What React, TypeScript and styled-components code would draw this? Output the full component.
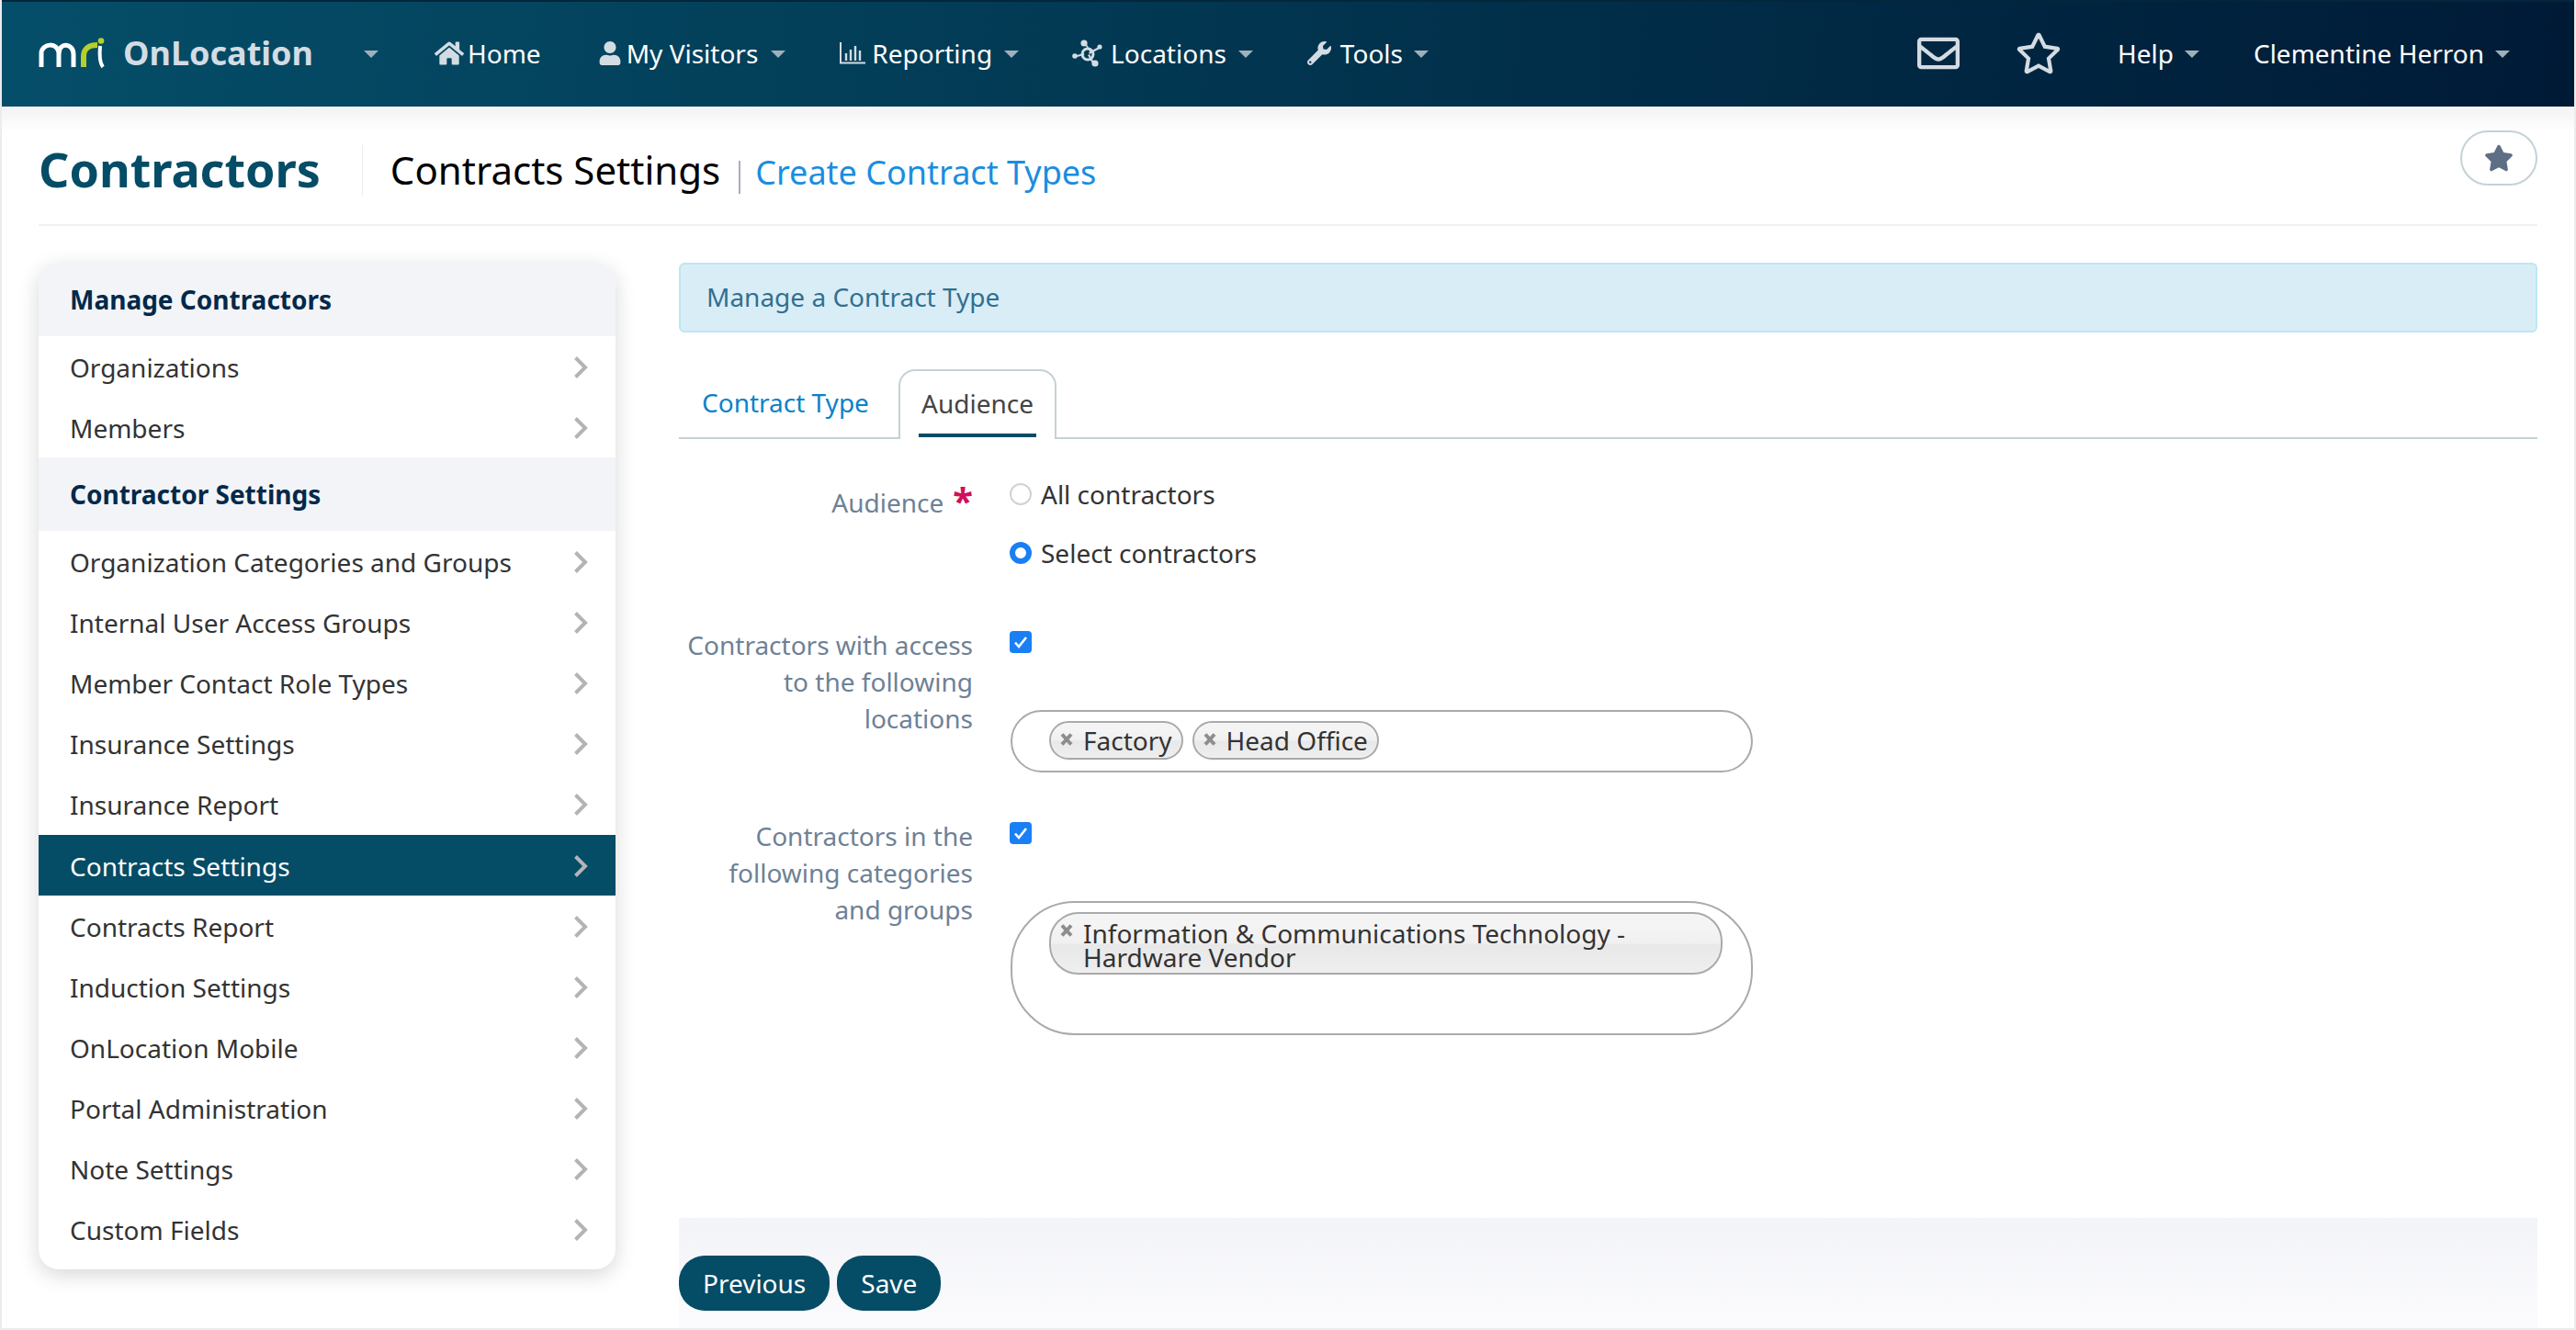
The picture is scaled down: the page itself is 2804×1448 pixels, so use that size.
import React from "react";
import styled, { createGlobalStyle } from "styled-components";
import { FaHome, FaUser, FaWrench, FaStar, FaRegStar, FaRegEnvelope } from "react-icons/fa";

const GlobalStyle = createGlobalStyle`
  html, body { margin: 0; padding: 0; background: #fff; }
  body { font-family: "Noto Sans", "Open Sans", sans-serif; font-size: 28px; color: #333; }
  * { box-sizing: border-box; }
`;

const Shell = styled.div`
  height: 1448px;
  width: 2804px;
  display: flex;
  flex-direction: column;
  border: 2px solid #ececec;
  border-top: 0;
  overflow: hidden;
`;

const TopBar = styled.header`
  height: 116px;
  flex: none;
  margin: 0 -2px;
  padding: 0 0 3px 42px;
  display: flex;
  align-items: center;
  color: #fff;
  border-top: 2px solid #04263a;
  background: linear-gradient(95deg, #054e69 0%, #03405a 30%, #012c47 65%, #001a36 100%);
`;

const Brand = styled.div`
  display: flex;
  align-items: center;
  width: 430px;
  flex: none;
`;

const BrandName = styled.span`
  margin-left: 20px;
  font-size: 36px;
  font-weight: 700;
  color: #d3dce3;
`;

const Caret = styled.i<{ $gap?: number; $after?: number }>`
  display: inline-block;
  width: 0;
  height: 0;
  margin-left: ${(p) => p.$gap ?? 12}px;
  margin-right: ${(p) => p.$after ?? 0}px;
  margin-top: 2px;
  border-left: 8px solid transparent;
  border-right: 8px solid transparent;
  border-top: 8px solid #9fb0bb;
`;

const BrandCaret = styled(Caret)`
  margin-left: 55px;
`;

const NavItem = styled.a`
  display: flex;
  align-items: center;
  color: #fff;
  font-size: 28px;
  white-space: nowrap;
  svg { color: #d3dce3; flex: none; }
`;

const UserMenu = styled(NavItem)`
  margin-left: 59px;
`;

const NavLabel = styled.span<{ $gap: number; $after?: number }>`
  margin-left: ${(p) => p.$gap}px;
  margin-right: ${(p) => p.$after ?? 0}px;
`;

const LeftNav = styled.nav`
  display: flex;
  align-items: center;
  gap: 58px;
  margin-left: 1px;
`;

const RightNav = styled.nav`
  margin-left: auto;
  margin-right: 72px;
  display: flex;
  align-items: center;
`;

const HeaderIcon = styled.span<{ $right: number }>`
  display: flex;
  color: #d3dce3;
  margin-right: ${(p) => p.$right}px;
`;

const HeaderShadow = styled.div`
  position: absolute;
  left: 0;
  right: 0;
  top: 0;
  height: 28px;
  background: linear-gradient(#f3f3f3, #fff);
`;

const TitleArea = styled.div`
  position: relative;
  flex: none;
  padding: 0 40px;
  height: 130px;
`;

const TitleBar = styled.div`
  position: relative;
  height: 130px;
  display: flex;
  align-items: flex-start;
  border-bottom: 2px solid #eef2f3;
`;

const PageTitle = styled.h1`
  margin: 42px 0 0;
  padding: 0 45px 0 0;
  height: 55px;
  font-size: 52px;
  line-height: 52px;
  font-weight: 700;
  color: #054c66;
  border-right: 1px solid #e9edef;
`;

const SubTitle = styled.div`
  margin-left: 30px;
  margin-top: 39px;
  display: flex;
  align-items: baseline;
  font-size: 42px;
  line-height: 60px;
  color: #000;
`;

const SubLink = styled.a`
  font-size: 36px;
  color: #1a8de0;
  margin-left: 20px;
  padding-left: 18px;
  position: relative;
  &::before {
    content: "";
    position: absolute;
    left: 0;
    top: 17px;
    height: 36px;
    width: 2px;
    background: #a9aebd;
  }
`;

const FavButton = styled.button`
  margin-left: auto;
  margin-top: 26px;
  width: 84px;
  height: 60px;
  border: 2px solid #c3d2d6;
  border-radius: 30px;
  background: #fff;
  color: #5e6e84;
  display: flex;
  align-items: center;
  justify-content: center;
  padding: 0;
`;

const Content = styled.div`
  flex: 1;
  min-height: 0;
  display: flex;
  padding: 40px 40px 0;
  gap: 69px;
`;

const Sidebar = styled.aside`
  width: 628px;
  align-self: flex-start;
  flex: none;
  border-radius: 22px;
  background: #fff;
  overflow: hidden;
  box-shadow: 0 6px 22px rgba(0, 0, 0, 0.16);
  padding-bottom: 10px;
`;

const SideHeading = styled.div`
  height: 80px;
  padding-left: 34px;
  display: flex;
  align-items: center;
  background: #f3f4f8;
  font-weight: 700;
  font-size: 28px;
  color: #02294a;
`;

const SideItem = styled.a<{ $active?: boolean }>`
  height: 66.15px;
  padding: 1px 30px 0 34px;
  display: flex;
  align-items: center;
  justify-content: space-between;
  font-size: 28px;
  color: ${(p) => (p.$active ? "#fff" : "#333")};
  background: ${(p) => (p.$active ? "#054c66" : "transparent")};
`;

const Chevron = () => (
  <svg width="16" height="26" viewBox="0 0 16 26" fill="none">
    <path d="M2.5 2.5 13 13 2.5 23.5" stroke="#b4b4b4" strokeWidth="4" />
  </svg>
);

const Main = styled.main`
  flex: 1;
  min-width: 0;
  display: flex;
  flex-direction: column;
`;

const InfoBar = styled.div`
  height: 76px;
  flex: none;
  padding: 0 0 2px 28px;
  display: flex;
  align-items: center;
  background: #d9edf7;
  border: 2px solid #bce8f1;
  border-radius: 6px;
  color: #31708f;
  font-size: 28px;
`;

const Tabs = styled.div`
  margin-top: 40px;
  height: 76px;
  flex: none;
  display: flex;
  align-items: stretch;
  border-bottom: 2px solid #c5d2d6;
`;

const PlainTab = styled.a`
  width: 239px;
  padding: 17px 0 0 25px;
  color: #0b82c8;
  font-size: 28px;
`;

const ActiveTab = styled.a`
  position: relative;
  width: 172px;
  height: 76px;
  padding-top: 16px;
  text-align: center;
  color: #444;
  font-size: 28px;
  background: #fff;
  border: 2px solid #c5d2d6;
  border-bottom: 0;
  border-radius: 18px 18px 0 0;
  &::after {
    content: "";
    position: absolute;
    left: 20px;
    right: 20px;
    bottom: 2px;
    height: 4px;
    background: #054c66;
  }
`;

const Form = styled.div`
  flex: 1;
  padding-top: 40px;
`;

const FormRow = styled.div<{ $bottom: number }>`
  display: flex;
  gap: 40px;
  margin-bottom: ${(p) => p.$bottom}px;
`;

const FieldLabel = styled.label<{ $top?: number }>`
  width: 320px;
  flex: none;
  padding-top: ${(p) => p.$top ?? 0}px;
  text-align: right;
  font-size: 28px;
  line-height: 40px;
  color: #6e8196;
`;

const Required = styled.span`
  color: #d0105a;
  font-size: 40px;
  font-weight: 700;
  line-height: 20px;
  margin-left: 10px;
  vertical-align: -2px;
`;

const Control = styled.div`
  flex: 1;
  min-width: 0;
`;

const RadioOption = styled.div`
  height: 40px;
  margin-bottom: 24px;
  display: flex;
  align-items: center;
  font-size: 28px;
  color: #333;
  &:last-child { margin-bottom: 0; }
`;

const RadioDot = styled.span<{ $on?: boolean }>`
  width: 24px;
  height: 24px;
  flex: none;
  margin-right: 10px;
  border-radius: 50%;
  background: #fff;
  border: ${(p) => (p.$on ? "6.5px solid #1a7ff5" : "2px solid #cfd2d4")};
`;

const CheckWrap = styled.div`
  height: 34px;
  display: flex;
  align-items: center;
`;

const CheckBox = styled.span`
  width: 24px;
  height: 24px;
  border-radius: 4px;
  background: #1a7ff5;
  display: flex;
  align-items: center;
  justify-content: center;
`;

const Check = () => (
  <svg width="16" height="14" viewBox="0 0 16 14" fill="none">
    <path d="M2 7.5 6 12 14 2" stroke="#fff" strokeWidth="2.6" />
  </svg>
);

const TagBox = styled.div<{ $height: number; $radius: number }>`
  width: 808px;
  height: ${(p) => p.$height}px;
  margin: 57px 0 0 1px;
  padding: 10px 30px 0 40px;
  display: flex;
  align-items: flex-start;
  gap: 10px;
  background: #fff;
  border: 2px solid #aaa;
  border-radius: ${(p) => p.$radius}px;
`;

const Tag = styled.div<{ $wide?: boolean }>`
  position: relative;
  width: ${(p) => (p.$wide ? "733px" : "auto")};
  height: ${(p) => (p.$wide ? "68px" : "42px")};
  padding: ${(p) => (p.$wide ? "8px 60px 0 35px" : "0 10px 0 35px")};
  font-size: 28px;
  line-height: ${(p) => (p.$wide ? "26px" : "38px")};
  color: #333;
  border: 2px solid #aaa;
  border-radius: ${(p) => (p.$wide ? "32px" : "21px")};
  background: linear-gradient(#f4f4f4 20%, #f0f0f0 50%, #e8e8e8 52%, #eee 100%);
  box-shadow: 0 0 2px #fff inset, 0 1px 0 rgba(0, 0, 0, 0.05);
  white-space: ${(p) => (p.$wide ? "normal" : "nowrap")};
`;

const TagClose = styled.span`
  position: absolute;
  left: 9px;
  top: 9px;
  display: flex;
`;

const CloseMark = () => (
  <svg width="16" height="18" viewBox="0 0 16 18" fill="none">
    <path d="M3 3.5 13 14.5M13 3.5 3 14.5" stroke="#8d8d8d" strokeWidth="4" />
  </svg>
);

const Footer = styled.div`
  height: 120px;
  flex: none;
  padding-top: 41px;
  display: flex;
  align-items: flex-start;
  gap: 8px;
  background: linear-gradient(#f3f4f8, #fbfbfd);
`;

const Button = styled.button`
  height: 60px;
  padding: 0 26px;
  border: 0;
  border-radius: 28px;
  background: #054c66;
  color: #fff;
  font-family: inherit;
  font-size: 28px;
`;

const BarsIcon = () => (
  <svg width="28" height="24" viewBox="0 0 28 24" fill="none" stroke="currentColor">
    <path d="M1 0v22.5h27" strokeWidth="2" />
    <path d="M7 12v8M12 8v12M17 4v16M22 9v11" strokeWidth="2.4" />
  </svg>
);

const NodesIcon = () => (
  <svg width="33" height="30" viewBox="0 0 33 30" fill="currentColor">
    <path d="M15 4l6 9.5-1 .8-7-10zM19 16l5 9-2 1-5-9zM18 14l11-6 1 2-11 6zM5 17l8-2 .4 2-8 2z" />
    <circle cx="13" cy="4" r="3.6" />
    <circle cx="17" cy="16" r="6" fill="none" stroke="currentColor" strokeWidth="3" />
    <circle cx="25" cy="26" r="3.6" />
    <circle cx="30" cy="8" r="2.6" />
    <circle cx="3" cy="18" r="2.8" />
  </svg>
);

const Logo = () => (
  <svg width="72" height="34" viewBox="0 0 72 34" fill="none">
    <path d="M3 32V17C3 6 22 4 22 18V32M22 18C22 4 38 6 38 18V32" stroke="#fff" strokeWidth="5" />
    <path d="M49 32V20C49 11 56 8 64 8" stroke="#b5cf2c" strokeWidth="6" />
    <circle cx="68" cy="3.5" r="3.3" fill="#b5cf2c" />
    <path d="M67 9C66 20 67 28 70 32" stroke="#fff" strokeWidth="4" />
  </svg>
);

const manageItems = ["Organizations", "Members"];

const settingItems = [
  "Organization Categories and Groups",
  "Internal User Access Groups",
  "Member Contact Role Types",
  "Insurance Settings",
  "Insurance Report",
  "Contracts Settings",
  "Contracts Report",
  "Induction Settings",
  "OnLocation Mobile",
  "Portal Administration",
  "Note Settings",
  "Custom Fields",
];

const App = () => {
  return (
    <>
      <GlobalStyle />
      <Shell>
        <TopBar>
          <Brand>
            <Logo />
            <BrandName>OnLocation</BrandName>
            <BrandCaret />
          </Brand>
          <LeftNav>
            <NavItem>
              <FaHome size={32} />
              <NavLabel $gap={4} $after={4}>Home</NavLabel>
            </NavItem>
            <NavItem>
              <FaUser size={26} />
              <NavLabel $gap={5}>My Visitors</NavLabel>
              <Caret $gap={14} $after={1} />
            </NavItem>
            <NavItem>
              <BarsIcon />
              <NavLabel $gap={7}>Reporting</NavLabel>
              <Caret $gap={13} />
            </NavItem>
            <NavItem>
              <NodesIcon />
              <NavLabel $gap={9}>Locations</NavLabel>
              <Caret $gap={13} $after={1} />
            </NavItem>
            <NavItem>
              <FaWrench size={26} />
              <NavLabel $gap={10}>Tools</NavLabel>
              <Caret />
            </NavItem>
          </LeftNav>
          <RightNav>
            <HeaderIcon $right={61}>
              <FaRegEnvelope size={46} />
            </HeaderIcon>
            <HeaderIcon $right={61}>
              <FaRegStar size={50} />
            </HeaderIcon>
            <NavItem>
              Help
              <Caret />
            </NavItem>
            <UserMenu>
              Clementine Herron
              <Caret />
            </UserMenu>
          </RightNav>
        </TopBar>
        <TitleArea>
          <HeaderShadow />
          <TitleBar>
            <PageTitle>Contractors</PageTitle>
            <SubTitle>
              Contracts Settings
              <SubLink>Create Contract Types</SubLink>
            </SubTitle>
            <FavButton>
              <FaStar size={32} />
            </FavButton>
          </TitleBar>
        </TitleArea>
        <Content>
          <Sidebar>
            <SideHeading>Manage Contractors</SideHeading>
            {manageItems.map((item) => (
              <SideItem key={item}>
                {item}
                <Chevron />
              </SideItem>
            ))}
            <SideHeading>Contractor Settings</SideHeading>
            {settingItems.map((item) => (
              <SideItem key={item} $active={item === "Contracts Settings"}>
                {item}
                <Chevron />
              </SideItem>
            ))}
          </Sidebar>
          <Main>
            <InfoBar>Manage a Contract Type</InfoBar>
            <Tabs>
              <PlainTab>Contract Type</PlainTab>
              <ActiveTab>Audience</ActiveTab>
            </Tabs>
            <Form>
              <FormRow $bottom={60}>
                <FieldLabel $top={9}>
                  Audience
                  <Required>*</Required>
                </FieldLabel>
                <Control>
                  <RadioOption>
                    <RadioDot />
                    All contractors
                  </RadioOption>
                  <RadioOption>
                    <RadioDot $on />
                    Select contractors
                  </RadioOption>
                </Control>
              </FormRow>
              <FormRow $bottom={49}>
                <FieldLabel>Contractors with access to the following locations</FieldLabel>
                <Control>
                  <CheckWrap>
                    <CheckBox>
                      <Check />
                    </CheckBox>
                  </CheckWrap>
                  <TagBox $height={68} $radius={34}>
                    <Tag>
                      <TagClose>
                        <CloseMark />
                      </TagClose>
                      Factory
                    </Tag>
                    <Tag>
                      <TagClose>
                        <CloseMark />
                      </TagClose>
                      Head Office
                    </Tag>
                  </TagBox>
                </Control>
              </FormRow>
              <FormRow $bottom={0}>
                <FieldLabel>Contractors in the following categories and groups</FieldLabel>
                <Control>
                  <CheckWrap>
                    <CheckBox>
                      <Check />
                    </CheckBox>
                  </CheckWrap>
                  <TagBox $height={146} $radius={70}>
                    <Tag $wide>
                      <TagClose>
                        <CloseMark />
                      </TagClose>
                      Information &amp; Communications Technology - Hardware Vendor
                    </Tag>
                  </TagBox>
                </Control>
              </FormRow>
            </Form>
            <Footer>
              <Button>Previous</Button>
              <Button>Save</Button>
            </Footer>
          </Main>
        </Content>
      </Shell>
    </>
  );
};

export default App;
